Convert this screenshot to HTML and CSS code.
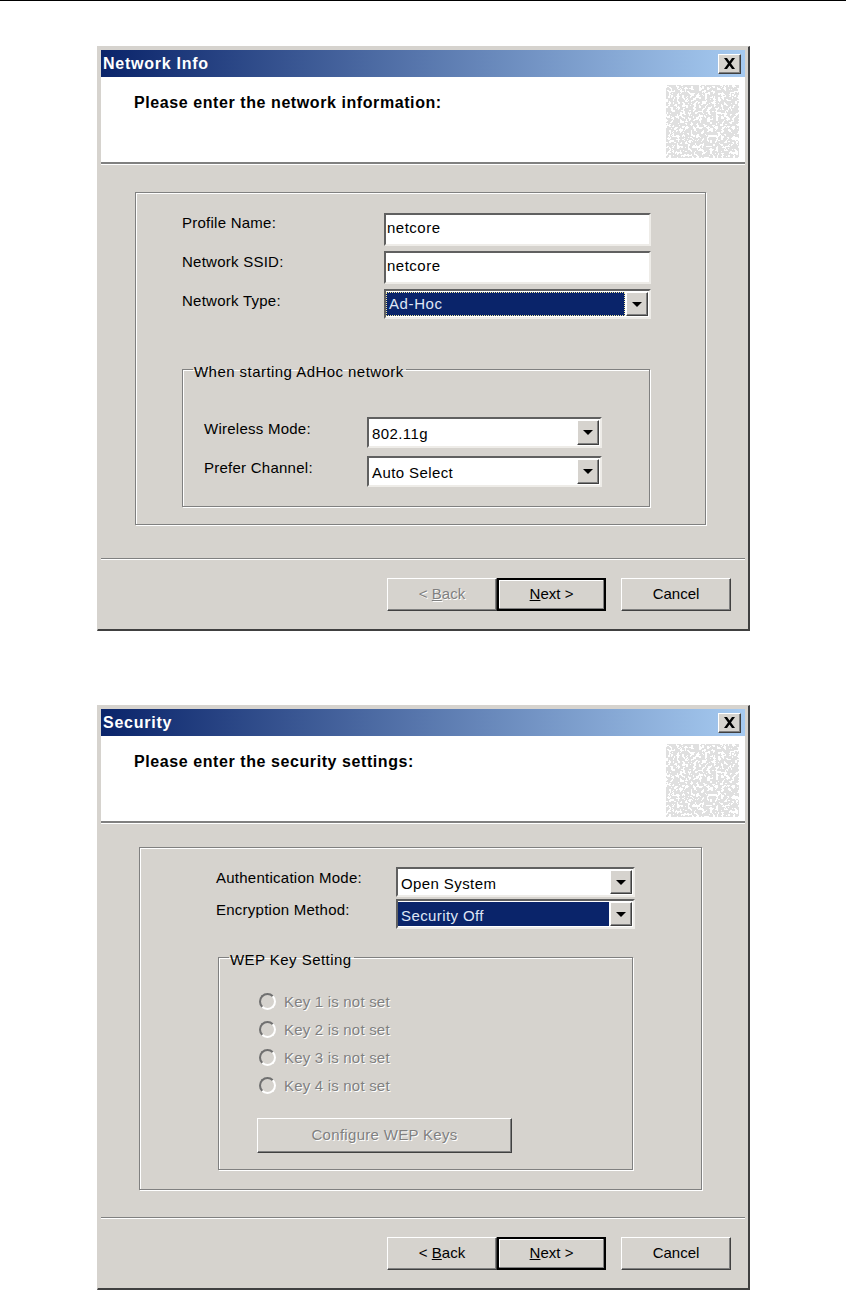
FILE: index.html
```html
<!DOCTYPE html>
<html lang="en">
<head>
  <meta charset="UTF-8">
  <title>Network Info and Security</title>
  <link rel="stylesheet" href="styles.css">
</head>
<body>
  <svg class="defs" width="0" height="0" aria-hidden="true">
    <filter id="noise" x="0" y="0" width="100%" height="100%">
      <feTurbulence type="fractalNoise" baseFrequency="0.36" numOctaves="2" seed="7"/>
      <feColorMatrix type="matrix" values="0 0 0 0 0.75  0 0 0 0 0.75  0 0 0 0 0.75  1.6 1.6 0 0 -0.98"/>
      <feComponentTransfer>
        <feFuncA type="discrete" tableValues="0 0 1 1"/>
      </feComponentTransfer>
    </filter>
  </svg>

  <div class="page-rule"></div>

  <section class="dialog">
    <div class="titlebar">
      <span>Network Info</span>
      <button class="close" type="button" aria-label="Close">
        <svg width="13" height="11" viewBox="0 0 13 11"><path d="M1 0h3l2.500 3.500L9 0h3L8 5.500 12 11H9L6.500 7.500 4 11H1l4-5.500z" fill="#000"/></svg>
      </button>
    </div>
    <div class="banner">
      <h2>Please enter the network information:</h2>
      <svg class="noise" width="73" height="73"><rect width="73" height="73" filter="url(#noise)"/></svg>
    </div>
    <div class="body">
      <div class="panel panel-network">
        <div class="rows rows-network">
          <label>Profile Name:</label>
          <input class="field" type="text" value="netcore">
          <label>Network SSID:</label>
          <input class="field" type="text" value="netcore">
          <label>Network Type:</label>
          <div class="combo combo-short">
            <span class="combo-value selected focused">Ad-Hoc</span>
            <span class="combo-arrow"></span>
          </div>
        </div>
        <fieldset class="group group-adhoc">
          <legend>When starting AdHoc network</legend>
          <div class="rows rows-adhoc">
            <label>Wireless Mode:</label>
            <div class="combo">
              <span class="combo-value">802.11g</span>
              <span class="combo-arrow"></span>
            </div>
            <label>Prefer Channel:</label>
            <div class="combo">
              <span class="combo-value">Auto Select</span>
              <span class="combo-arrow"></span>
            </div>
          </div>
        </fieldset>
      </div>
    </div>
    <div class="footer">
      <button class="btn" type="button" disabled>&lt; <u>B</u>ack</button>
      <button class="btn btn-default" type="button"><u>N</u>ext &gt;</button>
      <button class="btn btn-cancel" type="button">Cancel</button>
    </div>
  </section>

  <section class="dialog">
    <div class="titlebar">
      <span>Security</span>
      <button class="close" type="button" aria-label="Close">
        <svg width="13" height="11" viewBox="0 0 13 11"><path d="M1 0h3l2.500 3.500L9 0h3L8 5.500 12 11H9L6.500 7.500 4 11H1l4-5.500z" fill="#000"/></svg>
      </button>
    </div>
    <div class="banner">
      <h2>Please enter the security settings:</h2>
      <svg class="noise" width="73" height="73"><rect width="73" height="73" filter="url(#noise)"/></svg>
    </div>
    <div class="body">
      <div class="panel panel-security">
        <div class="rows rows-security">
          <label>Authentication Mode:</label>
          <div class="combo combo-short">
            <span class="combo-value">Open System</span>
            <span class="combo-arrow"></span>
          </div>
          <label>Encryption Method:</label>
          <div class="combo combo-short">
            <span class="combo-value selected">Security Off</span>
            <span class="combo-arrow"></span>
          </div>
        </div>
        <fieldset class="group group-wep">
          <legend>WEP Key Setting</legend>
          <div class="radio-list">
            <div class="radio"><span class="radio-dot"></span>Key 1 is not set</div>
            <div class="radio"><span class="radio-dot"></span>Key 2 is not set</div>
            <div class="radio"><span class="radio-dot"></span>Key 3 is not set</div>
            <div class="radio"><span class="radio-dot"></span>Key 4 is not set</div>
          </div>
          <button class="btn btn-wide" type="button" disabled>Configure WEP Keys</button>
        </fieldset>
      </div>
    </div>
    <div class="footer">
      <button class="btn" type="button">&lt; <u>B</u>ack</button>
      <button class="btn btn-default" type="button"><u>N</u>ext &gt;</button>
      <button class="btn btn-cancel" type="button">Cancel</button>
    </div>
  </section>
</body>
</html>
```

FILE: styles.css
```css
body {
  margin: 0;
  background: #fff;
  color: #000;
  font-family: "Liberation Sans", Arial, sans-serif;
  font-size: 15px;
}
.defs { display: block; height: 0; }
.page-rule {
  height: 1px;
  background: #000;
  margin-bottom: 45px;
}

/* window */
.dialog {
  width: 653px;
  height: 585px;
  box-sizing: border-box;
  margin-left: 97px;
  padding: 3px;
  display: flex;
  flex-direction: column;
  background: #d6d3ce;
  border: 1px solid #d6d3ce;
  border-right: 2px solid #404040;
  border-bottom: 2px solid #404040;
}
.dialog + .dialog { margin-top: 74px; }
.titlebar {
  height: 27px;
  flex: none;
  display: flex;
  align-items: center;
  justify-content: space-between;
  padding: 0 4px 0 2px;
  background: linear-gradient(to right, #0a246a, #a6caf0);
  color: #fff;
  font-size: 16px;
  font-weight: bold;
  letter-spacing: 0.75px;
}
.close {
  width: 23px;
  height: 20px;
  padding: 0;
  display: flex;
  align-items: center;
  justify-content: center;
  background: #d6d3ce;
  border: 1px solid;
  border-color: #fff #404040 #404040 #fff;
  box-shadow: inset -1px -1px 0 #808080;
}
.banner {
  height: 87px;
  flex: none;
  box-sizing: border-box;
  display: flex;
  justify-content: space-between;
  padding: 8px 6px 0 33px;
  background: #fff;
  border-bottom: 2px solid #808080;
  box-shadow: 0 1px 0 #fff;
}
.banner h2 {
  margin: 9px 0 0;
  font-size: 16px;
  font-weight: bold;
  letter-spacing: 0.58px;
}
.noise { display: block; }
.body { flex: 1; }

/* etched boxes */
.panel {
  box-sizing: border-box;
  border: 1px solid #808080;
  box-shadow: 1px 1px 0 #fff, inset 1px 1px 0 #fff;
}
.panel-network {
  width: 571px;
  height: 333px;
  margin: 28px 0 0 34px;
  padding: 20px 0 0 46px;
}
.panel-security {
  width: 563px;
  height: 343px;
  margin: 24px 0 0 38px;
  padding: 19px 0 0 76px;
}
.group {
  box-sizing: border-box;
  margin: 0;
  padding: 0;
  border: 1px solid #808080;
  box-shadow: 1px 1px 0 #fff, inset 1px 1px 0 #fff;
}
.group legend {
  margin-left: 10px;
  padding: 4px 2px 0 1px;
  font-size: 15px;
  line-height: 17px;
  letter-spacing: 0.45px;
}
.group-adhoc {
  width: 468px;
  height: 148px;
  margin-top: 40px;
}
.group-wep {
  width: 415px;
  height: 223px;
  margin: 18px 0 0 2px;
}

/* label + control rows */
.rows {
  display: grid;
  align-items: start;
}
.rows label {
  line-height: 18px;
  letter-spacing: 0.25px;
}
.rows-network {
  grid-template-columns: 202px 267px;
  row-gap: 5px;
}
.rows-network label { padding-top: 1px; }
.rows-network label:nth-of-type(2) { padding-top: 2px; }
.rows-network label:nth-of-type(3) { padding-top: 3px; }
.rows-adhoc {
  grid-template-columns: 163px 235px;
  row-gap: 8px;
  margin: 37px 0 0 21px;
}
.rows-adhoc label { padding-top: 3px; }
.rows-security {
  grid-template-columns: 180px 239px;
  row-gap: 2px;
}
.rows-security label { padding-top: 2px; }

/* inputs */
.field,
.combo {
  box-sizing: border-box;
  height: 31px;
  border: 2px solid;
  border-color: #606060 #eeece8 #eeece8 #606060;
  background: #fff;
  font: inherit;
}
.field {
  width: 100%;
  height: 33px;
  margin: 0;
  padding: 0 2px 5px 1px;
  outline: none;
  color: #000;
  letter-spacing: 0.5px;
}
.combo {
  display: flex;
  align-items: stretch;
  padding-right: 1px;
  letter-spacing: 0.4px;
}
.combo-short { height: 30px; }
.combo-value {
  flex: 1;
  display: flex;
  align-items: center;
  box-sizing: border-box;
  padding: 2px 0 0 3px;
  margin: 1px 1px 1px 0;
}
.combo-value.selected {
  background: #0a246a;
  color: #dfe6f5;
}
.combo-value.focused {
  padding: 0 0 2px 3px;
  outline: 1px dotted #f0e8a0;
  outline-offset: -1px;
  letter-spacing: 0.6px;
}
.combo-arrow {
  width: 22px;
  flex: none;
  margin: 1px 0;
  box-sizing: border-box;
  display: flex;
  align-items: center;
  justify-content: center;
  background: #d6d3ce;
  border: 1px solid;
  border-color: #fff #404040 #404040 #fff;
  box-shadow: inset -1px -1px 0 #808080;
}
.combo-arrow::after {
  content: "";
  border: 5px solid transparent;
  border-top: 5px solid #000;
  border-bottom: 0;
}

/* WEP radios */
.radio-list {
  display: flex;
  flex-direction: column;
  margin: 19px 0 0 40px;
}
.radio {
  height: 28px;
  display: flex;
  align-items: center;
  gap: 8px;
  color: #808080;
  text-shadow: 1px 1px 0 #fff;
  letter-spacing: 0.2px;
}
.radio-dot {
  width: 17px;
  height: 17px;
  box-sizing: border-box;
  border: 2px solid;
  border-color: #707070 #fff #fff #707070;
  border-radius: 50%;
}

/* buttons */
.btn {
  box-sizing: border-box;
  width: 110px;
  height: 33px;
  padding: 0 0 2px;
  background: #d6d3ce;
  color: #000;
  font: inherit;
  border: 1px solid;
  border-color: #fff #404040 #404040 #fff;
  box-shadow: inset -1px -1px 0 #808080;
}
.btn:disabled {
  color: #808080;
  text-shadow: 1px 1px 0 #fff;
}
.btn-default {
  width: 109px;
  border: 2px solid #000;
  box-shadow: inset -1px -1px 0 #808080, inset 1px 1px 0 #fff;
}
.btn-cancel { margin-left: 15px; }
.btn-wide {
  display: block;
  width: 255px;
  height: 35px;
  margin: 19px 0 0 38px;
  letter-spacing: 0.3px;
}
.footer {
  height: 68px;
  flex: none;
  box-sizing: border-box;
  display: flex;
  padding: 19px 0 0 286px;
  border-top: 1px solid #808080;
  box-shadow: inset 0 1px 0 #fff;
}
```
